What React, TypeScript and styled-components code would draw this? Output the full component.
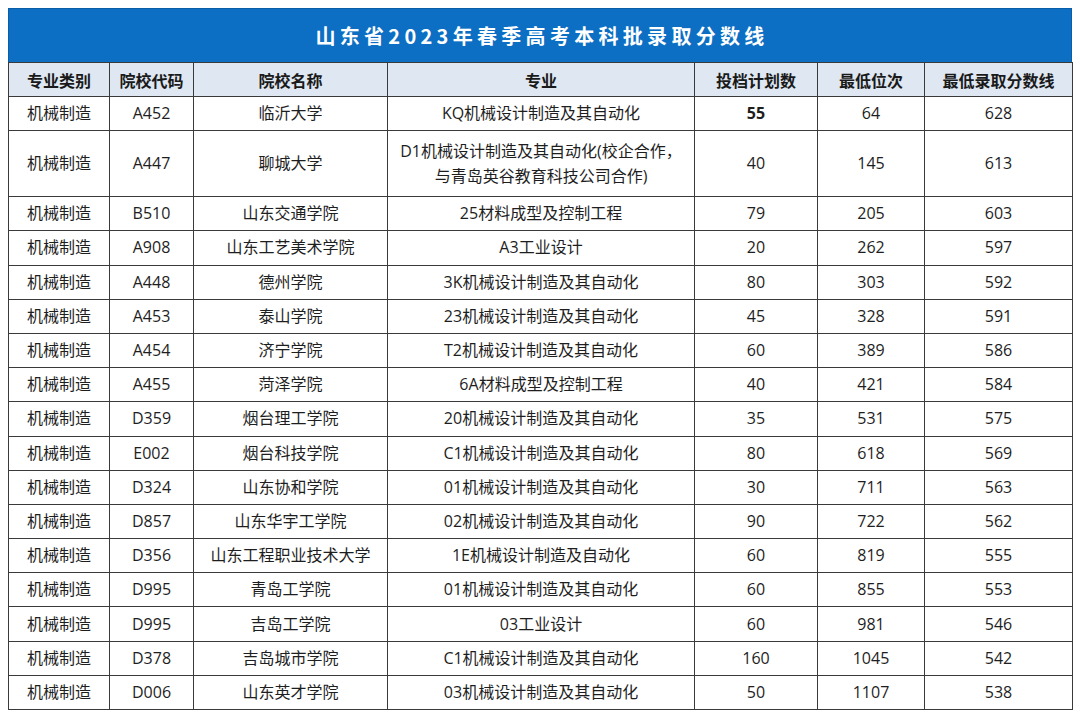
import React from "react";
import styled, { createGlobalStyle } from "styled-components";

const Global = createGlobalStyle`
  html, body { margin: 0; padding: 0; background: #ffffff; }
  body { font-family: "Open Sans", "Noto Sans CJK SC", sans-serif; }
`;

const Page = styled.div`
  width: 1080px;
  height: 718px;
  padding: 8px 8px 0 8px;
  box-sizing: border-box;
  background: #fff;
`;

const Frame = styled.div`
  width: 1064px;
`;

const TitleBar = styled.div`
  height: 54px;
  background: #0c6fc3;
  border: 1px solid #0a5ea8;
  border-bottom: none;
  box-sizing: border-box;
  display: flex;
  align-items: center;
  justify-content: center;
  color: #ffffff;
  font-family: "Noto Sans CJK SC", sans-serif;
  font-weight: 700;
  font-size: 20px;
  letter-spacing: 4.3px;
  padding-left: 4px;
  padding-bottom: 1px;
`;

const Table = styled.table`
  width: 1064px;
  border-collapse: collapse;
  table-layout: fixed;
  border: 1.5px solid #2f2f2f;
`;

const HeadCell = styled.th`
  height: 33px;
  padding: 0;
  background: #dfe8f2;
  border: 1px solid #3a3a3a;
  font-family: "Noto Sans CJK SC", sans-serif;
  font-weight: 700;
  font-size: 16px;
  color: #1a1a1a;
  text-align: center;
  vertical-align: middle;
`;

const Cell = styled.td<{ $bold?: boolean; $tall?: boolean }>`
  height: ${(p) => (p.$tall ? "65px" : "33.2px")};
  padding: 0;
  border: 1px solid #3a3a3a;
  font-family: "Open Sans", "Noto Sans CJK SC", sans-serif;
  font-size: 16px;
  font-weight: ${(p) => (p.$bold ? 700 : 400)};
  color: #1e1e1e;
  text-align: center;
  vertical-align: middle;
  line-height: 25px;
`;

const widths = [101, 84, 194, 307, 123, 107, 148];
const headers = ["专业类别", "院校代码", "院校名称", "专业", "投档计划数", "最低位次", "最低录取分数线"];

type Row = [string, string, string, string, string, string, string];

const rows: Row[] = [
  ["机械制造", "A452", "临沂大学", "KQ机械设计制造及其自动化", "55", "64", "628"],
  ["机械制造", "A447", "聊城大学", "D1机械设计制造及其自动化(校企合作，\n与青岛英谷教育科技公司合作)", "40", "145", "613"],
  ["机械制造", "B510", "山东交通学院", "25材料成型及控制工程", "79", "205", "603"],
  ["机械制造", "A908", "山东工艺美术学院", "A3工业设计", "20", "262", "597"],
  ["机械制造", "A448", "德州学院", "3K机械设计制造及其自动化", "80", "303", "592"],
  ["机械制造", "A453", "泰山学院", "23机械设计制造及其自动化", "45", "328", "591"],
  ["机械制造", "A454", "济宁学院", "T2机械设计制造及其自动化", "60", "389", "586"],
  ["机械制造", "A455", "菏泽学院", "6A材料成型及控制工程", "40", "421", "584"],
  ["机械制造", "D359", "烟台理工学院", "20机械设计制造及其自动化", "35", "531", "575"],
  ["机械制造", "E002", "烟台科技学院", "C1机械设计制造及其自动化", "80", "618", "569"],
  ["机械制造", "D324", "山东协和学院", "01机械设计制造及其自动化", "30", "711", "563"],
  ["机械制造", "D857", "山东华宇工学院", "02机械设计制造及其自动化", "90", "722", "562"],
  ["机械制造", "D356", "山东工程职业技术大学", "1E机械设计制造及自动化", "60", "819", "555"],
  ["机械制造", "D995", "青岛工学院", "01机械设计制造及其自动化", "60", "855", "553"],
  ["机械制造", "D995", "吉岛工学院", "03工业设计", "60", "981", "546"],
  ["机械制造", "D378", "吉岛城市学院", "C1机械设计制造及其自动化", "160", "1045", "542"],
  ["机械制造", "D006", "山东英才学院", "03机械设计制造及其自动化", "50", "1107", "538"],
];

const Major = ({ text }: { text: string }) => {
  const parts = text.split("\n");
  return (
    <>
      {parts.map((p, i) => (
        <React.Fragment key={i}>
          {i > 0 && <br />}
          {p}
        </React.Fragment>
      ))}
    </>
  );
};

export default function App() {
  return (
    <Page>
      <Global />
      <Frame>
        <TitleBar>山东省2023年春季高考本科批录取分数线</TitleBar>
        <Table>
          <colgroup>
            {widths.map((w, i) => (
              <col key={i} style={{ width: w }} />
            ))}
          </colgroup>
          <thead>
            <tr>
              {headers.map((h) => (
                <HeadCell key={h}>{h}</HeadCell>
              ))}
            </tr>
          </thead>
          <tbody>
            {rows.map((r, ri) => {
              const tall = r[3].includes("\n");
              return (
                <tr key={ri}>
                  {r.map((c, ci) => (
                    <Cell key={ci} $tall={tall} $bold={ri === 0 && ci === 4}>
                      {ci === 3 ? <Major text={c} /> : c}
                    </Cell>
                  ))}
                </tr>
              );
            })}
          </tbody>
        </Table>
      </Frame>
    </Page>
  );
}
